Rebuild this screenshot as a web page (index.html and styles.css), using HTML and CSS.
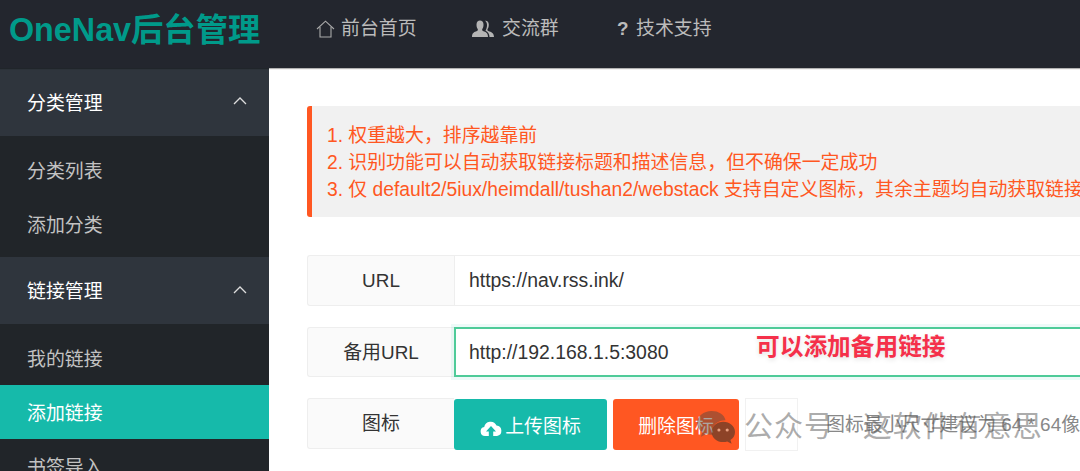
FILE: index.html
```html
<!DOCTYPE html>
<html lang="zh-CN">
<head>
  <meta charset="UTF-8" />
  <title>OneNav后台管理</title>
  <link rel="stylesheet" href="styles.css">
</head>
<body>

  <div class="topbar">
    <div class="logo">OneNav后台管理</div>
    <ul class="top-nav">
      <li class="home">
        <svg class="ico" width="19" height="18" viewBox="0 0 19 18" fill="none" stroke="#aaa" stroke-width="1.1"><path d="M1 9 9.5 1.2 18 9"/><path d="M4 7v10h11V7"/></svg>
        前台首页
      </li>
      <li class="group">
        <svg class="ico" width="23" height="18" viewBox="0 0 23 18" fill="#b4b4b4"><path d="M0 17c0-4 2-5 5-6 1-.5 1-1 .7-2C4.800 8 4.500 6 4.500 4.500 4.500 2 6 .5 8 .5s3.500 1.500 3.500 4c0 1.500-.3 3.500-1.200 4.500-.3 1-.3 1.500.7 2 3 1 5 2 5 6z"/><path d="M13 .8c2-.5 3.800 1 3.800 3.700 0 1.500-.3 3.500-1.200 4.500-.3 1-.3 1.500.7 2 3 1 5.700 2 5.700 6h-4.500c0-3-1.500-5-4-6.300.8-1.200 1.500-3.500 1.500-5.700 0-1.700-.7-3.300-2-4.200z"/></svg>
        交流群
      </li>
      <li class="help">
        <span class="qmark">?</span>
        技术支持
      </li>
    </ul>
  </div>

  <div class="layout">
    <div class="sidebar">
      <div class="side-head first">分类管理 <svg class="chev" width="14" height="8" viewBox="0 0 14 8" fill="none" stroke="#ddd" stroke-width="1.300"><path d="M1 7 7 1l6 6"/></svg></div>
      <ul class="side-list">
        <li>分类列表</li>
        <li>添加分类</li>
      </ul>
      <div class="side-head">链接管理 <svg class="chev" width="14" height="8" viewBox="0 0 14 8" fill="none" stroke="#ddd" stroke-width="1.300"><path d="M1 7 7 1l6 6"/></svg></div>
      <ul class="side-list">
        <li>我的链接</li>
        <li class="active">添加链接</li>
        <li>书签导入</li>
      </ul>
    </div>

    <div class="main">
      <div class="tips">
        <span class="en">1.</span> 权重越大，排序越靠前<br>
        <span class="en">2.</span> 识别功能可以自动获取链接标题和描述信息，但不确保一定成功<br>
        <span class="en">3.</span> 仅 <span class="en">default2/5iux/heimdall/tushan2/webstack</span> 支持自定义图标，其余主题均自动获取链接图标
      </div>

      <div class="form-row">
        <label class="form-label">URL</label>
        <div class="form-input">https://nav.rss.ink/</div>
      </div>

      <div class="form-row">
        <label class="form-label">备用URL</label>
        <div class="form-input focus">http://192.168.1.5:3080</div>
      </div>

      <div class="form-row">
        <label class="form-label">图标</label>
        <button class="btn btn-teal">
          <svg width="22" height="16" viewBox="0 0 22 16" fill="#fff"><path d="M5 16a4.500 4.500 0 0 1-.8-8.900A6.500 6.500 0 0 1 16.500 5.500 5.300 5.300 0 0 1 17 16h-3.800v-4.500h2.800L11 6 6 11.500h2.800V16z"/></svg>上传图标
        </button>
        <button class="btn btn-orange">删除图标</button>
        <div class="preview"></div>
        <span class="hint">图标最小尺寸建议为 64 * 64像素</span>
      </div>
    </div>
  </div>

  <!-- things pasted over the screenshot -->
  <div class="note">可以添加备用链接</div>
  <div class="watermark">
    <svg width="38" height="35" viewBox="0 0 39 34"><path fill="#5c4a40" fill-opacity=".5" d="M15 0C7 0 0 5.500 0 12.500c0 4 2.300 7.300 5.500 9.500L4 26.500l5.500-2.800c1.500.5 3.300.8 5.500.8h1c-.5-1.300-.7-2.500-.7-3.500 0-6.500 6-11.500 14-11.500C28 3.500 22 0 15 0z"/><path fill="#5c3a2a" fill-opacity=".7" d="M39 21.500C39 15.500 33.500 11 27 11s-12 4.500-12 10.500S20.500 32 27 32c1.500 0 2.800-.2 4-.6l4.500 2.400-1.200-4C37.200 28 39 25 39 21.500z"/><circle cx="22.500" cy="19.500" r="1.600" fill="#e8a080"/><circle cx="31" cy="19.500" r="1.600" fill="#e8a080"/></svg>
    <span class="wm-text">公众号 · 这软件有意思</span>
  </div>

</body>
</html>
```

FILE: styles.css
```css
html, body {
  margin: 0;
  padding: 0;
  height: 100%;
  overflow: hidden;
}

body {
  font-family: "Liberation Sans", "Noto Sans CJK SC", sans-serif;
  font-size: 18.9px;
  color: #333;
  background: #fff;
  position: relative;
}

ul {
  list-style: none;
  margin: 0;
  padding: 0;
}

.topbar {
  height: 68px;
  background: #23262e;
  display: flex;
  box-shadow: 0 1px 1px rgba(0, 0, 0, 0.3);
  position: relative;
}

.logo {
  width: 269px;
  padding-left: 9px;
  box-sizing: border-box;
  color: #009a8a;
  font-size: 32.3px;
  font-weight: bold;
  line-height: 60px;
  white-space: nowrap;
}

.top-nav {
  display: flex;
  color: #bbb;
  line-height: 58px;
}

.top-nav li {
  display: flex;
  align-items: center;
  height: 58px;
}

.home {
  margin-left: 47px;
  width: 156px;
}

.home .ico {
  margin-right: 6px;
}

.group {
  width: 145px;
}

.group .ico {
  margin-right: 7px;
}

.qmark {
  font-weight: bold;
  width: 19px;
}

.layout {
  display: flex;
  height: 403px;
  overflow: hidden;
}

.sidebar {
  width: 269px;
  flex: none;
  background: #212529;
}

.side-head {
  height: 67px;
  box-sizing: border-box;
  padding: 0 22px 2px 27px;
  background: #2f353d;
  color: #fff;
  display: flex;
  align-items: center;
  justify-content: space-between;
}

.side-head.first {
  height: 68px;
}

.side-list {
  padding: 7px 0 6px;
  color: #c2c2c2;
}

.side-list li {
  height: 54px;
  line-height: 57px;
  padding-left: 27px;
}

.side-list li.active {
  background: #16baaa;
  color: #fff;
}

.main {
  flex: none;
  width: 1000px;
  padding: 38px 0 0 38px;
  box-sizing: border-box;
}

.tips {
  height: 111px;
  box-sizing: border-box;
  padding: 16px 0 0 15px;
  background: #f1f1f1;
  border-left: 5px solid #ff5722;
  border-radius: 3px;
  color: #ff5722;
  line-height: 27px;
  white-space: nowrap;
  overflow: hidden;
  margin-bottom: 38px;
}

.tips .en {
  font-size: 19.3px;
}

.form-row {
  display: flex;
  height: 50.5px;
  margin-bottom: 21px;
}

.form-label {
  width: 147px;
  box-sizing: border-box;
  border: 1px solid #eee;
  border-right: none;
  border-radius: 3px 0 0 3px;
  background: #fafafa;
  text-align: center;
  line-height: 49px;
}

.form-input {
  flex: 1;
  box-sizing: border-box;
  border: 1px solid #eee;
  padding-left: 14px;
  font-size: 19.4px;
  line-height: 49px;
}

.form-input.focus {
  border: 2px solid #4fcb99;
  padding-left: 13px;
  line-height: 47px;
  box-shadow: 0 0 0 3px rgba(22, 186, 170, 0.08);
}

.btn {
  height: 51px;
  margin-top: 1px;
  border: none;
  border-radius: 3px;
  color: #fff;
  font: inherit;
  line-height: 55px;
  padding: 0;
}

.btn-teal {
  width: 153px;
  background: #16baaa;
}

.btn-teal svg {
  vertical-align: -3px;
  margin-right: 3px;
}

.btn-orange {
  width: 126px;
  margin-left: 6px;
  background: #ff5722;
}

.preview {
  width: 53px;
  height: 53px;
  box-sizing: border-box;
  border: 1px solid #f1f1f1;
  margin-left: 6px;
}

.hint {
  margin-left: 28px;
  color: #888;
  line-height: 54px;
  white-space: nowrap;
}

.note {
  position: absolute;
  left: 756px;
  top: 331px;
  color: #f5304a;
  font-size: 23.7px;
  font-weight: bold;
  line-height: 32px;
  text-shadow: 0 2px 5px rgba(0, 0, 0, 0.12);
}

.watermark {
  position: absolute;
  left: 697px;
  top: 410px;
  display: flex;
  white-space: nowrap;
}

.wm-text {
  margin-left: 9px;
  color: rgba(90, 90, 90, 0.5);
  font-size: 29px;
  letter-spacing: 1px;
  line-height: 34px;
}
```
